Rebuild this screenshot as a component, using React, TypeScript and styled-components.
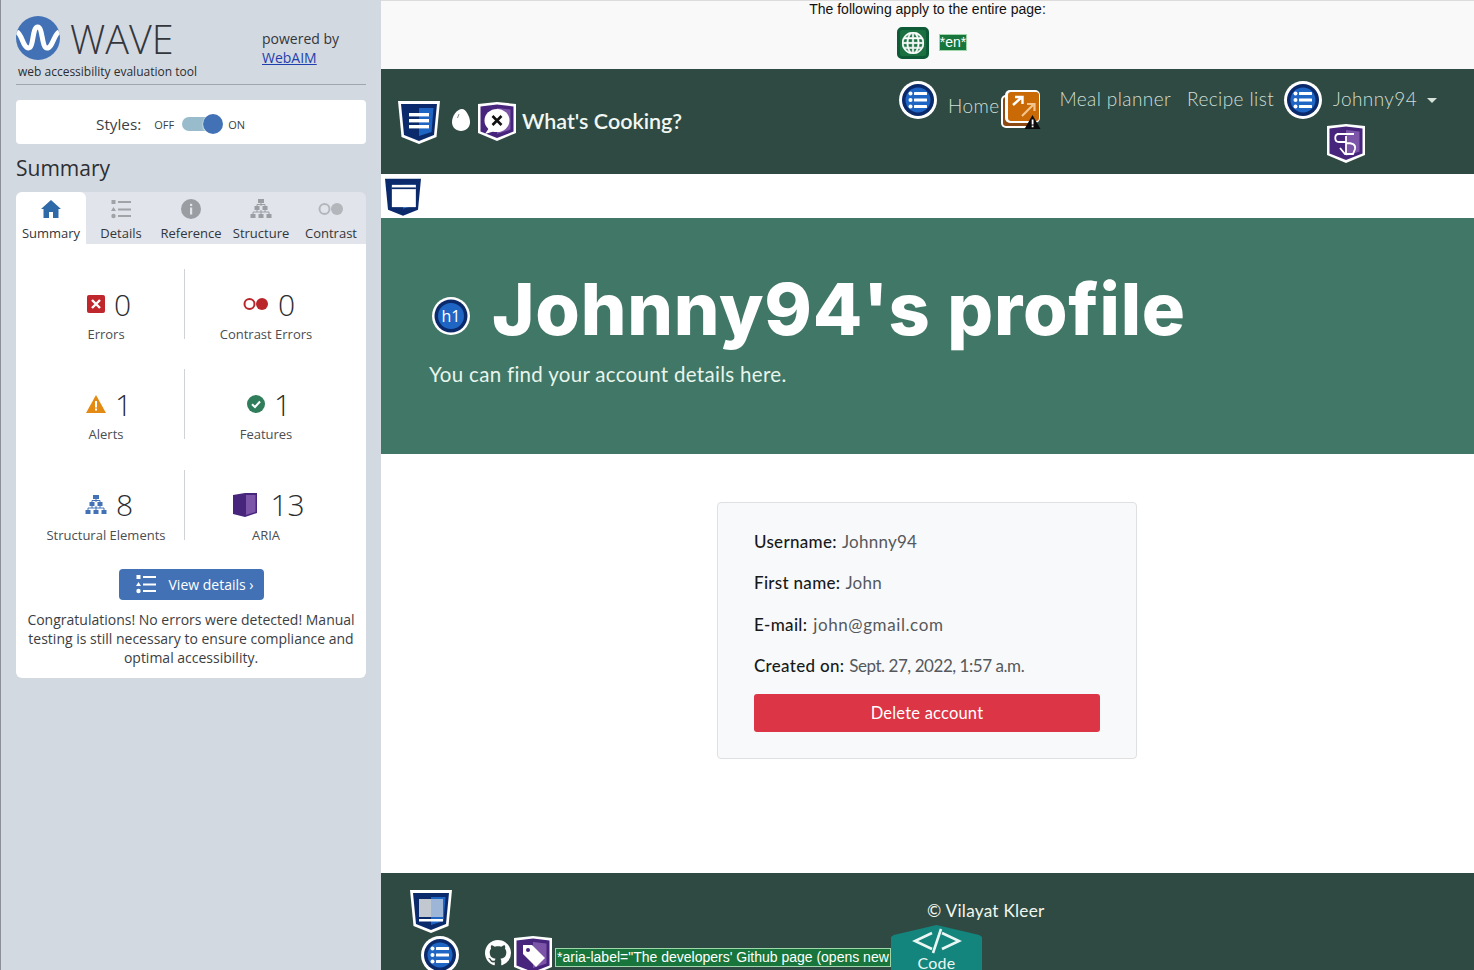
import React from 'react'
import styled, { createGlobalStyle } from 'styled-components'
import { BsGithub, BsGlobe } from 'react-icons/bs'

const navyDark = '#0b2a6b'
const navyLight = '#1f66c4'
const purpleDark = '#47257c'
const purpleLight = '#7c54a8'
const forest = '#2f4a42'

const Global = createGlobalStyle`
  html, body { margin: 0; padding: 0; height: 970px; overflow: hidden; background: #fff; }
  * { box-sizing: border-box; }
`

const Page = styled.div`
  display: flex;
  width: 1474px;
  height: 970px;
  overflow: hidden;
  font-family: "Open Sans", sans-serif;
`

/* ---- wave sidebar ---- */
const Sidebar = styled.aside`
  width: 381px;
  flex: none;
  height: 970px;
  background: #d3d9e1;
  border-left: 1px solid #8b9098;
  padding: 0 15px 0 15px;
  color: #2c2f33;
`

const LogoRow = styled.div`
  display: flex;
  height: 85px;
  border-bottom: 1px solid #a2a7ae;
  padding-top: 16px;
`

const LogoMain = styled.div`
  width: 246px;
`

const LogoTop = styled.div`
  display: flex;
  align-items: center;
  gap: 10px;
  height: 44px;
`

const WaveWord = styled.span`
  font-size: 39.5px;
  font-weight: 300;
  color: #33373c;
  padding-top: 2px;
`

const Tagline = styled.div`
  font-size: 12px;
  line-height: 16px;
  margin: 4px 0 0 2px;
  color: #2b2d30;
  white-space: nowrap;
`

const Powered = styled.div`
  font-size: 14px;
  line-height: 19px;
  padding-top: 13px;
  color: #33363a;
  a { color: #1f3fae; text-decoration: underline; }
`

const StylesCard = styled.div`
  margin-top: 15px;
  height: 44px;
  background: #fff;
  border-radius: 4px;
  display: flex;
  align-items: center;
  padding: 3px 0 0 80px;
  font-size: 15.3px;
  color: #3b3e42;
`

const OffLabel = styled.span`
  font-size: 11px;
  margin: 1px 8px 0 13px;
`

const OnLabel = styled.span`
  font-size: 11px;
  margin: 1px 0 0 6px;
`

const Toggle = styled.div`
  position: relative;
  width: 40px;
  height: 14px;
  border-radius: 7px;
  background: #98bccb;
`

const Knob = styled.div`
  position: absolute;
  right: -1px;
  top: -3px;
  width: 20px;
  height: 20px;
  border-radius: 50%;
  background: #4272b5;
  box-shadow: 0 1px 2px rgba(255, 255, 255, 0.9), 0 0 1px #fff;
`

const SummaryTitle = styled.h2`
  font-size: 21px;
  font-weight: 400;
  line-height: 30px;
  margin: 9px 0 9px;
  color: #2c2f33;
`

const Tabs = styled.div`
  display: flex;
  height: 52px;
  background: #e1e5eb;
  border-radius: 6px 6px 0 0;
`

const Tab = styled.div<{ $active?: boolean }>`
  width: 70px;
  display: flex;
  flex-direction: column;
  align-items: center;
  padding-top: 7px;
  font-size: 13px;
  line-height: 18px;
  color: #33363a;
  white-space: nowrap;
  border-radius: 6px 6px 0 0;
  background: ${p => (p.$active ? '#fff' : 'transparent')};
`

const TabIcon = styled.div`
  height: 20px;
  margin-bottom: 5px;
  display: flex;
  align-items: center;
`

const Panel = styled.div`
  background: #fff;
  border-radius: 0 0 6px 6px;
  height: 434px;
  padding-top: 25px;
`

const StatGrid = styled.div`
  display: grid;
  grid-template-columns: 158px 162px;
  row-gap: 30.4px;
  margin-left: 11px;
`

const Stat = styled.div`
  height: 70px;
  display: flex;
  flex-direction: column;
  align-items: center;
  &:nth-child(odd) { border-right: 1px solid #cfd2d6; padding-left: 1px; }
`

const StatTop = styled.div`
  display: flex;
  align-items: center;
  gap: 9px;
  height: 32px;
  margin-top: 19px;
  padding-left: 6px;
  font-size: 30px;
  font-weight: 300;
  color: #2b2d30;
`

const StatLabel = styled.div`
  font-size: 13px;
  line-height: 16px;
  color: #4a4d52;
  margin-top: 6px;
  white-space: nowrap;
`

const DetailsButton = styled.div`
  width: 145px;
  height: 31px;
  margin: 29.2px auto 0;
  background: #4272b5;
  border-radius: 4px;
  color: #fff;
  font-size: 14px;
  display: flex;
  align-items: center;
  padding-left: 17px;
  gap: 13px;
  white-space: nowrap;
`

const Congrats = styled.p`
  margin: 10px 0 0;
  text-align: center;
  font-size: 14px;
  line-height: 19px;
  color: #3b3e42;
  padding: 0 8px;
`

/* ---- page under test ---- */
const Main = styled.main`
  flex: 1;
  min-width: 0;
  font-family: Lato, sans-serif;
`

const Notice = styled.div`
  height: 69px;
  background: #f9f9f9;
  border-top: 1px solid #dcdcdc;
  font-family: "Liberation Sans", Arial, sans-serif;
  font-size: 14px;
  text-align: center;
  color: #111;
  line-height: 16px;
`

const NoticeIcons = styled.div`
  display: flex;
  justify-content: center;
  align-items: center;
  gap: 10px;
  margin-top: 10px;
  margin-left: 9px;
`

const GlobeBadge = styled.div`
  width: 32px;
  height: 32px;
  border-radius: 5px;
  background: #1a7040;
  border: 3px solid #0e5a37;
  color: #fff;
  display: flex;
  align-items: center;
  justify-content: center;
`

const InjectedLabel = styled.span`
  background: #18763d;
  border: 1px solid #9fd6ac;
  color: #fff;
  font-family: "Liberation Sans", Arial, sans-serif;
  font-size: 14px;
  line-height: 15px;
  white-space: nowrap;
`

const EnLabel = styled(InjectedLabel)`
  margin-bottom: 2px;
`

const NavBar = styled.nav`
  height: 105px;
  background: ${forest};
  display: flex;
  padding-left: 17px;
`

const Brand = styled.div`
  display: flex;
  align-items: center;
  width: 501px;
  flex: none;
`

const Egg = styled.svg`
  margin: 0 8px 3px 12px;
`

const BrandName = styled.span`
  font-family: Lato, sans-serif;
  font-size: 21.5px;
  font-weight: 600;
  color: #f1f7f2;
  margin: 0 0 1px 6px;
  white-space: nowrap;
`

const NavItems = styled.div`
  display: flex;
  align-items: flex-start;
  padding-top: 12px;
`

const NavLink = styled.span<{ $left: number; $top: number }>`
  font-family: Lato, sans-serif;
  font-size: 19px;
  font-weight: 300;
  letter-spacing: 0.4px;
  color: #d0dfd6;
  white-space: nowrap;
  line-height: 24px;
  margin-left: ${p => p.$left}px;
  margin-top: ${p => p.$top}px;
`

const Caret = styled.span`
  display: inline-block;
  width: 0;
  height: 0;
  margin-left: 10px;
  vertical-align: 3px;
  border-top: 5px solid #d6e2da;
  border-left: 5px solid transparent;
  border-right: 5px solid transparent;
`

const UserMenu = styled.div`
  display: flex;
  flex-direction: column;
`

const TouchSlot = styled.div`
  margin: 13px 0 0 5px;
`

const OrangeSlot = styled.div`
  margin: 8px 0 0 2px;
  height: 40px;
`

const NavCircle = styled.div`
  margin-left: 10px;
`

const Strip = styled.div`
  height: 44px;
  padding: 4px 0 0 4px;
  background: #fff;
`

const Hero = styled.header`
  height: 236px;
  background: #417766;
  padding: 45px 0 0 48px;
`

const HeroHeading = styled.h1`
  margin: 0 0 0 3px;
  display: flex;
  align-items: center;
  gap: 22px;
  height: 90px;
  font-family: Inter, sans-serif;
  font-weight: 800;
  font-size: 72px;
  letter-spacing: 0.8px;
  color: #fff;
  white-space: nowrap;
`

const HeadingBadge = styled.span`
  margin-top: 16px;
`

const HeroSub = styled.p`
  margin: 8px 0 0;
  font-family: Lato, sans-serif;
  font-size: 20.5px;
  font-weight: 400;
  letter-spacing: 0.3px;
  color: #e8f5ec;
  line-height: 26px;
`

const Content = styled.section`
  height: 419px;
  padding: 48px 1px 0 0;
  display: flex;
  justify-content: center;
  background: #fff;
`

const Card = styled.div`
  width: 420px;
  height: 257px;
  background: #f8f9fa;
  border: 1px solid #dfe0e1;
  border-radius: 4px;
  padding: 27px 36px 0;
`

const Row = styled.div<{ $track?: number }>`
  font-family: Lato, sans-serif;
  font-size: 17px;
  line-height: 24px;
  color: #55585c;
  margin-bottom: 17.3px;
  letter-spacing: ${p => p.$track ?? 0.25}px;
  white-space: nowrap;
  font-weight: 400;
  b { font-weight: 500; color: #17191b; letter-spacing: 0.3px; margin-right: 1px; }
`

const DeleteButton = styled.div`
  height: 38px;
  margin-top: -1px;
  background: #dc3545;
  border-radius: 3px;
  color: #fff;
  font-size: 16.5px;
  display: flex;
  align-items: center;
  justify-content: center;
  letter-spacing: 0.2px;
`

const Footer = styled.footer`
  position: relative;
  height: 97px;
  background: ${forest};
  overflow: hidden;
  padding: 16px 0 0 29px;
`

const FooterTop = styled.div`
  display: flex;
  height: 47px;
`

const Copy = styled.div`
  margin: 12px 0 0 475px;
  font-size: 17.2px;
  font-weight: 400;
  color: #f2f6ee;
  letter-spacing: 0.25px;
  line-height: 20px;
  white-space: nowrap;
`

const FooterRow = styled.div`
  display: flex;
  align-items: flex-start;
  padding-left: 11px;
`

const GithubMark = styled.div`
  color: #fff;
  margin: 4px 3px 0 26px;
  display: flex;
`

const AriaLabel = styled(InjectedLabel)`
  margin: 12px 0 0 3px;
  width: 336px;
  height: 19px;
  line-height: 17px;
  padding-left: 1px;
`

const CodeTab = styled.div`
  position: absolute;
  left: 510px;
  top: 52px;
  width: 91px;
  height: 46px;
  background: #14857c;
  clip-path: polygon(0 26%, 3% 22%, 50% 0, 97% 22%, 100% 26%, 100% 100%, 0 100%);
  color: #e9f6f3;
  text-align: center;
  font-family: Lato, sans-serif;
  padding-top: 3px;
`

const CodeMark = styled.svg`
  display: block;
  margin: 0 auto;
`

const CodeText = styled.div`
  font-size: 16px;
  line-height: 17px;
  letter-spacing: 0.3px;
`

/* ---- icons ---- */
const shieldOuter = 'M0 1 H42 L38.5 37 L21 44 L3.5 37 Z'
const shieldInner = 'M3 4 H39 L36 35 L21 41 L6 35 Z'
const shieldRight = 'M21 8 H35.5 L33.5 32 L21 36 Z'

function Shield({ dark, light, children, outline = true, size = 42 }: {
  dark: string; light: string; children?: React.ReactNode; outline?: boolean; size?: number
}) {
  return (
    <svg width={size} height={size * 44 / 42} viewBox="0 0 42 44" style={{ display: 'block', flex: 'none' }}>
      {outline && <path d={shieldOuter} fill="#fff" />}
      <path d={outline ? shieldInner : shieldOuter} fill={dark} />
      <path d={shieldRight} fill={light} />
      {children}
    </svg>
  )
}

// the purple aria badge is fatter than the html5 shield
function PurpleBadge({ children }: { children?: React.ReactNode }) {
  return (
    <svg width="38" height="39" viewBox="0 0 38 39" style={{ display: 'block', flex: 'none' }}>
      <path d="M0 2 L19 0 L38 2 V31 L19 39 L0 31 Z" fill="#fff" />
      <path d="M2.5 4.5 L19 2.5 L35.5 4.5 V29.5 L19 36 L2.5 29.5 Z" fill={purpleDark} />
      <path d="M19 6 L32.5 7.5 V27.5 L19 32 Z" fill={purpleLight} />
      {children}
    </svg>
  )
}

function ListCircle() {
  return (
    <svg width="38" height="38" viewBox="0 0 38 38" style={{ display: 'block', flex: 'none' }}>
      <circle cx="19" cy="19" r="19" fill="#fff" />
      <circle cx="19" cy="19" r="16" fill={navyDark} />
      <circle cx="19" cy="19" r="12.5" fill={navyLight} />
      {[12.5, 19, 25.5].map(y => (
        <g key={y} fill="#fff">
          <circle cx="11.5" cy={y} r="2" />
          <rect x="15" y={y - 1.5} width="13" height="3" rx="0.5" />
        </g>
      ))}
    </svg>
  )
}

function H1Badge() {
  return (
    <svg width="38" height="38" viewBox="0 0 38 38" style={{ display: 'block', flex: 'none' }}>
      <circle cx="19" cy="19" r="19" fill="#fff" />
      <circle cx="19" cy="19" r="16.5" fill={navyDark} />
      <circle cx="19" cy="19" r="13" fill={navyLight} />
      <text x="19" y="25" textAnchor="middle" fontSize="16" fontWeight="400" letterSpacing="0" fontFamily="Open Sans, sans-serif" fill="#fff">h1</text>
    </svg>
  )
}

function OrangeLink() {
  return (
    <svg width="42" height="42" viewBox="0 0 42 42" style={{ display: 'block' }}>
      <rect x="0" y="6" width="33" height="33" rx="5" fill="#fff" />
      <rect x="2" y="8" width="30" height="29" rx="3" fill="#8d4a12" />
      <rect x="4" y="1" width="35" height="33" rx="5" fill="#fff" />
      <rect x="7" y="3" width="31" height="29" rx="3" fill="#c96a06" />
      <path d="M12 16 L21 8 M14 8 H21.5 V15" stroke="#fff" strokeWidth="2.4" fill="none" />
      <path d="M21 27 L33 15 M26 15 H33.5 V22" stroke="#f3c48c" strokeWidth="2.2" fill="none" />
      <path d="M31.5 26 L39.5 40 H23.5 Z" fill="#0b0b0b" />
      <rect x="30.7" y="30.5" width="1.8" height="5" fill="#fff" />
      <rect x="30.7" y="36.5" width="1.8" height="1.8" fill="#fff" />
    </svg>
  )
}

function StructureIcon({ color, size = 22 }: { color: string; size?: number }) {
  return (
    <svg width={size} height={size} viewBox="0 0 22 22">
      <g fill={color}>
        <rect x="8" y="1" width="6" height="4" />
        <rect x="4.5" y="8" width="5" height="4" />
        <rect x="12.5" y="8" width="5" height="4" />
        <rect x="0.5" y="16" width="5" height="4" />
        <rect x="8.5" y="16" width="5" height="4" />
        <rect x="16.5" y="16" width="5" height="4" />
      </g>
      <path d="M11 5 V8 M7 8 V6.5 H15 V8 M3 16 V14 H19 V16 M11 12 V16 M7 12 V14 M15 12 V14" stroke={color} strokeWidth="1" fill="none" />
    </svg>
  )
}

function ListIcon({ color, size = 20 }: { color: string; size?: number }) {
  return (
    <svg width={size} height={size} viewBox="0 0 20 20">
      <g fill={color}>
        <rect x="0.5" y="1" width="4" height="4" />
        <path d="M2.5 8 L5 12 H0 Z" />
        <circle cx="2.5" cy="17" r="2.2" />
        <rect x="7" y="2" width="13" height="2" />
        <rect x="7" y="9.5" width="13" height="2" />
        <rect x="7" y="16" width="13" height="2" />
      </g>
    </svg>
  )
}

function Stat2Circles({ ring, fill, size = 26 }: { ring: string; fill: string; size?: number }) {
  return (
    <svg width={size} height={size * 14 / 26} viewBox="0 0 26 14">
      <circle cx="6.5" cy="7" r="5" fill="none" stroke={ring} strokeWidth="2" />
      <circle cx="19" cy="7" r="6" fill={fill} />
    </svg>
  )
}

function WaveLogo() {
  return (
    <svg width="44" height="44" viewBox="0 0 44 44">
      <circle cx="22" cy="22" r="22" fill="#4272b5" />
      <path d="M1 16 C6 18 7 32 12.5 32 C18 32 16 11 21.7 11 C27 11 25.5 32 31 32 C36.5 32 38 18 43 16" fill="none" stroke="#fff" strokeWidth="5" />
    </svg>
  )
}

function HomeIcon() {
  return (
    <svg width="20" height="18" viewBox="0 0 20 18">
      <path d="M10 0 L20 9 L17.5 9 V18 H12 V12 H8 V18 H2.5 V9 L0 9 Z" fill="#2f6aa8" />
    </svg>
  )
}

const StatData = [
  {
    label: 'Errors', value: '0',
    icon: (
      <svg width="18" height="18" viewBox="0 0 18 18">
        <rect width="18" height="18" rx="2" fill="#c0272d" />
        <path d="M5 5 L13 13 M13 5 L5 13" stroke="#fff" strokeWidth="2.4" />
      </svg>
    ),
  },
  { label: 'Contrast Errors', value: '0', icon: <Stat2Circles ring="#b9252b" fill="#b9252b" /> },
  {
    label: 'Alerts', value: '1',
    icon: (
      <svg width="20" height="18" viewBox="0 0 20 18">
        <path d="M10 0 L20 18 H0 Z" fill="#e28a13" />
        <rect x="9" y="6" width="2" height="6.5" fill="#fff" />
        <rect x="9" y="13.5" width="2" height="2" fill="#fff" />
      </svg>
    ),
  },
  {
    label: 'Features', value: '1',
    icon: (
      <svg width="18" height="18" viewBox="0 0 18 18">
        <circle cx="9" cy="9" r="9" fill="#2f7d5b" />
        <path d="M5 9.2 L8 12 L13 6.5" fill="none" stroke="#fff" strokeWidth="2" />
      </svg>
    ),
  },
  { label: 'Structural Elements', value: '8', icon: <StructureIcon color="#4272b5" /> },
  {
    label: 'ARIA', value: '13',
    icon: (
      <svg width="24" height="24" viewBox="0 0 24 24" style={{ marginRight: 4 }}>
        <path d="M0 2 L12 0 H24 V20 L12 24 L0 21 Z" fill="#47257c" />
        <path d="M13 2 H22.5 V19 L13 22 Z" fill="#7c54a8" />
      </svg>
    ),
  },
]

export default function App() {
  return (
    <Page>
      <Global />
      <Sidebar>
        <LogoRow>
          <LogoMain>
            <LogoTop><WaveLogo /><WaveWord>WAVE</WaveWord></LogoTop>
            <Tagline>web accessibility evaluation tool</Tagline>
          </LogoMain>
          <Powered>powered by<br /><a href="#webaim">WebAIM</a></Powered>
        </LogoRow>
        <StylesCard>
          Styles:
          <OffLabel>OFF</OffLabel>
          <Toggle><Knob /></Toggle>
          <OnLabel>ON</OnLabel>
        </StylesCard>
        <SummaryTitle>Summary</SummaryTitle>
        <Tabs>
          <Tab $active><TabIcon><HomeIcon /></TabIcon>Summary</Tab>
          <Tab><TabIcon><ListIcon color="#a0a3a8" /></TabIcon>Details</Tab>
          <Tab>
            <TabIcon>
              <svg width="20" height="20" viewBox="0 0 20 20">
                <circle cx="10" cy="10" r="10" fill="#9a9da2" />
                <rect x="9" y="8.5" width="2.2" height="7" fill="#e1e5eb" />
                <rect x="9" y="4.8" width="2.2" height="2.2" fill="#e1e5eb" />
              </svg>
            </TabIcon>
            Reference
          </Tab>
          <Tab><TabIcon><StructureIcon color="#9a9da2" /></TabIcon>Structure</Tab>
          <Tab><TabIcon><Stat2Circles ring="#b3b6ba" fill="#b3b6ba" /></TabIcon>Contrast</Tab>
        </Tabs>
        <Panel>
          <StatGrid>
            {StatData.map(s => (
              <Stat key={s.label}>
                <StatTop>{s.icon}<span>{s.value}</span></StatTop>
                <StatLabel>{s.label}</StatLabel>
              </Stat>
            ))}
          </StatGrid>
          <DetailsButton><ListIcon color="#fff" />View details ›</DetailsButton>
          <Congrats>
            Congratulations! No errors were detected! Manual testing is still necessary to ensure compliance and optimal accessibility.
          </Congrats>
        </Panel>
      </Sidebar>

      <Main>
        <Notice>
          The following apply to the entire page:
          <NoticeIcons>
            <GlobeBadge><BsGlobe size={22} stroke="currentColor" strokeWidth={0.4} /></GlobeBadge>
            <EnLabel>*en*</EnLabel>
          </NoticeIcons>
        </Notice>

        <NavBar>
          <Brand>
            <Shield dark={navyDark} light={navyLight}>
              <rect x="11" y="13" width="20" height="3.4" fill="#fff" />
              <rect x="11" y="19" width="20" height="3.4" fill="#fff" />
              <rect x="11" y="25" width="20" height="3.4" fill="#fff" />
            </Shield>
            <Egg width="18" height="22" viewBox="0 0 18 22">
              <path d="M10 0 C14 0 18 8 18 13 C18 18.5 14 22 9 22 C4 22 0 18.5 0 13 C0 7 5 0 10 0 Z" fill="#fff" />
              <path d="M7 5 L5.5 9" stroke="#5b6e68" strokeWidth="0.8" />
            </Egg>
            <PurpleBadge>
              <ellipse cx="19" cy="18.5" rx="12.5" ry="11.5" fill="#fff" />
              <path d="M11 26 L7 32 L17 29 Z" fill="#fff" />
              <path d="M14.5 14 L23.5 23 M23.5 14 L14.5 23" stroke="#111" strokeWidth="2.6" />
            </PurpleBadge>
            <BrandName>What's Cooking?</BrandName>
          </Brand>
          <NavItems>
            <ListCircle />
            <NavLink $left={11} $top={13}>Home</NavLink>
            <OrangeSlot><OrangeLink /></OrangeSlot>
            <NavLink $left={16} $top={6}>Meal planner</NavLink>
            <NavLink $left={16} $top={6}>Recipe list</NavLink>
            <NavCircle><ListCircle /></NavCircle>
            <UserMenu>
              <NavLink $left={11} $top={6}>Johnny94<Caret /></NavLink>
              <TouchSlot>
                <PurpleBadge>
                  <path d="M10 10 H27 M12 10 C7 10 7 18 12 18 H19 M19 12 V29 M19 19 C25 19 29 20 28 25 L26 30 H18 L13 24" fill="none" stroke="#fff" strokeWidth="1.8" />
                </PurpleBadge>
              </TouchSlot>
            </UserMenu>
          </NavItems>
        </NavBar>

        <Strip>
          <Shield dark={navyDark} light={navyLight} outline={false} size={36}>
            <rect x="8" y="8" width="28" height="26" fill="#fff" />
            <rect x="8" y="11" width="28" height="2" fill={navyDark} />
          </Shield>
        </Strip>

        <Hero>
          <HeroHeading><HeadingBadge><H1Badge /></HeadingBadge>Johnny94's profile</HeroHeading>
          <HeroSub>You can find your account details here.</HeroSub>
        </Hero>

        <Content>
          <Card>
            <Row><b>Username:</b> Johnny94</Row>
            <Row><b>First name:</b> John</Row>
            <Row $track={0.6}><b>E-mail:</b> john@gmail.com</Row>
            <Row $track={-0.45}><b>Created on:</b> Sept. 27, 2022, 1:57 a.m.</Row>
            <DeleteButton>Delete account</DeleteButton>
          </Card>
        </Content>

        <Footer>
          <FooterTop>
            <Shield dark={navyDark} light={navyLight}>
              <rect x="9" y="10" width="12" height="18" fill="#c2c8d0" />
              <rect x="21" y="10" width="12" height="18" fill="#9db6d8" />
              <rect x="9" y="30" width="24" height="2.5" fill="#fff" />
            </Shield>
            <Copy>© Vilayat Kleer</Copy>
          </FooterTop>
          <FooterRow>
            <ListCircle />
            <GithubMark><BsGithub size={26} /></GithubMark>
            <PurpleBadge>
              <path d="M9 9 H18 L31 22 L22 31 L9 18 Z" fill="#fff" />
              <circle cx="14" cy="14" r="2" fill={purpleDark} />
            </PurpleBadge>
            <AriaLabel>*aria-label="The developers' Github page (opens new</AriaLabel>
          </FooterRow>
          <CodeTab>
            <CodeMark width="50" height="26" viewBox="0 0 50 26" fill="none" stroke="#e9f6f3" strokeWidth="2.6">
              <path d="M20 5 L3 13 L20 21 M30 5 L47 13 L30 21 M29 1 L21 25" />
            </CodeMark>
            <CodeText>Code</CodeText>
          </CodeTab>
        </Footer>
      </Main>
    </Page>
  )
}
